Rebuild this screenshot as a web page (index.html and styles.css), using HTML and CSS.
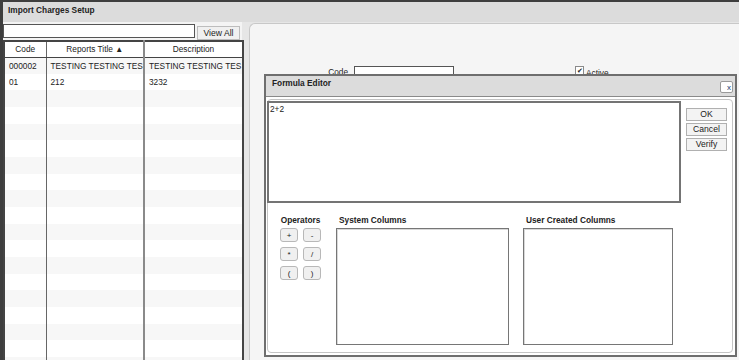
FILE: index.html
```html
<!DOCTYPE html>
<html lang="en">
<head>
    <meta charset="UTF-8">
    <meta name="viewport" content="width=device-width, initial-scale=1.0">
    <title>Import Charges Setup</title>
    <link rel="stylesheet" href="styles.css">
</head>
<body>
    <div class="window">
        <div class="win-title">Import Charges Setup</div>

        <div class="win-body">
            <div class="list-pane">
                <div class="search-row">
                    <input class="search-box" type="text">
                    <button class="view-all">View All</button>
                </div>

                <table class="grid">
                    <colgroup>
                        <col class="col-code">
                        <col class="col-title">
                        <col class="col-desc">
                    </colgroup>
                    <thead>
                        <tr>
                            <th>Code</th>
                            <th>Reports Title <span class="sort">&#9650;</span></th>
                            <th>Description</th>
                        </tr>
                    </thead>
                    <tbody>
                        <tr><td>000002</td><td>TESTING TESTING TES</td><td>TESTING TESTING TES</td></tr>
                        <tr><td>01</td><td>212</td><td>3232</td></tr>
                        <tr><td></td><td></td><td></td></tr>
                        <tr><td></td><td></td><td></td></tr>
                        <tr><td></td><td></td><td></td></tr>
                        <tr><td></td><td></td><td></td></tr>
                        <tr><td></td><td></td><td></td></tr>
                        <tr><td></td><td></td><td></td></tr>
                        <tr><td></td><td></td><td></td></tr>
                        <tr><td></td><td></td><td></td></tr>
                        <tr><td></td><td></td><td></td></tr>
                        <tr><td></td><td></td><td></td></tr>
                        <tr><td></td><td></td><td></td></tr>
                        <tr><td></td><td></td><td></td></tr>
                        <tr><td></td><td></td><td></td></tr>
                        <tr><td></td><td></td><td></td></tr>
                        <tr><td></td><td></td><td></td></tr>
                        <tr><td></td><td></td><td></td></tr>
                        <tr><td></td><td></td><td></td></tr>
                    </tbody>
                </table>
            </div>

            <div class="detail-pane">
                <div class="field-row">
                    <label class="field-label">Code</label>
                    <input class="code-input" type="text">
                    <span class="check-box">&#10004;</span>
                    <span class="check-label">Active</span>
                </div>
            </div>
        </div>

        <!-- modal formula editor -->
        <div class="formula-editor">
            <div class="fe-title">
                <span>Formula Editor</span>
                <span class="fe-close">x</span>
            </div>
            <div class="fe-body">
                <div class="fe-panel">
                    <div class="fe-top">
                        <textarea class="formula-text">2+2</textarea>
                        <div class="fe-actions">
                            <button class="fe-btn">OK</button>
                            <button class="fe-btn">Cancel</button>
                            <button class="fe-btn">Verify</button>
                        </div>
                    </div>

                    <div class="fe-bottom">
                        <div class="operators">
                            <div class="group-label center">Operators</div>
                            <div class="op-grid">
                                <button class="op-btn">+</button>
                                <button class="op-btn">-</button>
                                <button class="op-btn">*</button>
                                <button class="op-btn">/</button>
                                <button class="op-btn">(</button>
                                <button class="op-btn">)</button>
                            </div>
                        </div>
                        <div class="column-group system-cols">
                            <div class="group-label">System Columns</div>
                            <div class="column-list"></div>
                        </div>
                        <div class="column-group user-cols">
                            <div class="group-label">User Created Columns</div>
                            <div class="column-list"></div>
                        </div>
                    </div>
                </div>
            </div>
        </div>
    </div>
</body>
</html>
```

FILE: styles.css
```css
* {
    margin: 0;
    padding: 0;
    box-sizing: border-box;
    font-family: "Liberation Sans", Arial, sans-serif;
}

body {
    background: #dcdcdc;
    color: #222;
    font-size: 8.3px;
    overflow: hidden;
}

.window {
    position: relative;
    width: 739px;
    height: 360px;
    border-top: 2px solid #3e3e3e;
    border-left: 3px solid #3e3e3e;
    background: #e6e6e6;
    overflow: hidden;
}

.win-title {
    height: 20px;
    padding: 3px 0 0 5px;
    background: #dcdcdc;
    font-weight: bold;
    line-height: 10px;
}

.win-body {
    display: flex;
    height: 338px;
}

/* left list */
.list-pane {
    width: 239px;
    background: #f4f4f4;
}

.search-row {
    display: flex;
    align-items: flex-start;
    height: 18px;
    padding-top: 2px;
}

.search-box {
    width: 192px;
    height: 14px;
    border: 1px solid #555;
    background: #fff;
}

.view-all {
    width: 43px;
    height: 14px;
    margin: 2px 0 0 2px;
    border: 1px solid #bdbdbd;
    background: #f0f0f0;
    font-size: 8.6px;
    color: #222;
}

.grid {
    width: 239px;
    table-layout: fixed;
    border-collapse: collapse;
    border: 2px solid #444;
    border-bottom: none;
    background: #fff;
}

.col-code { width: 42px; }
.col-title { width: 98px; }
.col-desc { width: 99px; }

.grid th {
    height: 16px;
    font-weight: normal;
    text-align: center;
    border-bottom: 1px solid #444;
    background: #fff;
}

.grid .sort {
    font-size: 8px;
}

.grid td {
    height: 16.67px;
    padding-left: 4px;
    white-space: nowrap;
    overflow: hidden;
}

.grid th:first-child,
.grid td:first-child {
    border-right: 1px solid #666;
}

.grid th:nth-child(2),
.grid td:nth-child(2) {
    border-right: 2px solid #8a8a8a;
}

.grid tbody tr:nth-child(odd) td {
    background: #f7f7f7;
}

/* right detail */
.detail-pane {
    flex: 1;
    margin: 1px 0 0 7px;
    background: #f5f5f5;
    border: 1px solid #c8c8c8;
    border-right: none;
    border-bottom: none;
    border-top-left-radius: 6px;
}

.field-row {
    display: flex;
    align-items: flex-start;
    padding-top: 42px;
}

.field-label {
    width: 98px;
    margin-right: 6px;
    text-align: right;
    line-height: 10px;
    padding-top: 1px;
}

.code-input {
    width: 100px;
    height: 12px;
    border: 1px solid #555;
    background: #fff;
}

.check-box {
    width: 9px;
    height: 9px;
    margin-left: 121px;
    border: 1px solid #8a8a8a;
    background: #fff;
    font-size: 7px;
    line-height: 7px;
    text-align: center;
    color: #222;
}

.check-label {
    margin-left: 2px;
    padding-top: 2px;
    line-height: 10px;
}

/* formula editor dialog */
.formula-editor {
    position: absolute;
    left: 261px;
    top: 72px;
    width: 473px;
    height: 283px;
    display: flex;
    flex-direction: column;
    border: 2px solid #6e6e6e;
    background: #fff;
}

.fe-title {
    display: flex;
    justify-content: space-between;
    height: 21px;
    padding: 2px 2px 0 6px;
    background: #dcdcdc;
    border-bottom: 1px solid #8a8a8a;
    font-weight: bold;
    line-height: 10px;
}

.fe-close {
    width: 13px;
    height: 12px;
    margin-top: 3px;
    padding: 1px 1px 0 0;
    border: 1px solid #9a9a9a;
    border-radius: 2px;
    background: #fff;
    color: #173a70;
    font-size: 8px;
    font-weight: normal;
    line-height: 9px;
    text-align: right;
}

.fe-body {
    flex: 1;
    padding: 2px 2px 2px 1px;
}

.fe-panel {
    height: 100%;
    border: 1px solid #c4c4c4;
    border-radius: 4px;
}

.fe-top {
    display: flex;
    align-items: flex-start;
}

.formula-text {
    width: 414px;
    height: 102px;
    margin: 1px 0 0 -1px;
    padding: 1px 1px;
    border: 2px solid #747474;
    font-size: 8.3px;
    line-height: 10px;
    resize: none;
    color: #222;
}

.fe-actions {
    display: flex;
    flex-direction: column;
    gap: 2px;
    margin: 8px 0 0 5px;
}

.fe-btn {
    width: 41px;
    height: 13px;
    border: 1px solid #b0b0b0;
    background: #f3f3f3;
    font-size: 8.6px;
    line-height: 11px;
    color: #222;
}

.fe-bottom {
    display: flex;
    align-items: flex-start;
    margin-top: 12px;
    padding-left: 12px;
}

.group-label {
    height: 10px;
    margin-bottom: 3px;
    padding-left: 3px;
    font-weight: bold;
    line-height: 10px;
}

.group-label.center {
    padding-left: 0;
    text-align: center;
}

.operators {
    width: 41px;
}

.op-grid {
    display: grid;
    grid-template-columns: 18px 18px;
    gap: 5px;
    margin-top: 1px;
}

.op-btn {
    height: 14px;
    border: 1px solid #b8b8b8;
    border-radius: 3px;
    background: #f0f0f0;
    font-size: 8px;
    color: #222;
}

.system-cols {
    margin-left: 15px;
}

.user-cols {
    margin-left: 14px;
}

.column-list {
    height: 117px;
    border: 1px solid #767676;
    box-shadow: inset 1px 1px 0 #d8d8d8;
    background: #fff;
}

.system-cols .column-list {
    width: 173px;
}

.user-cols .column-list {
    width: 150px;
}
```
